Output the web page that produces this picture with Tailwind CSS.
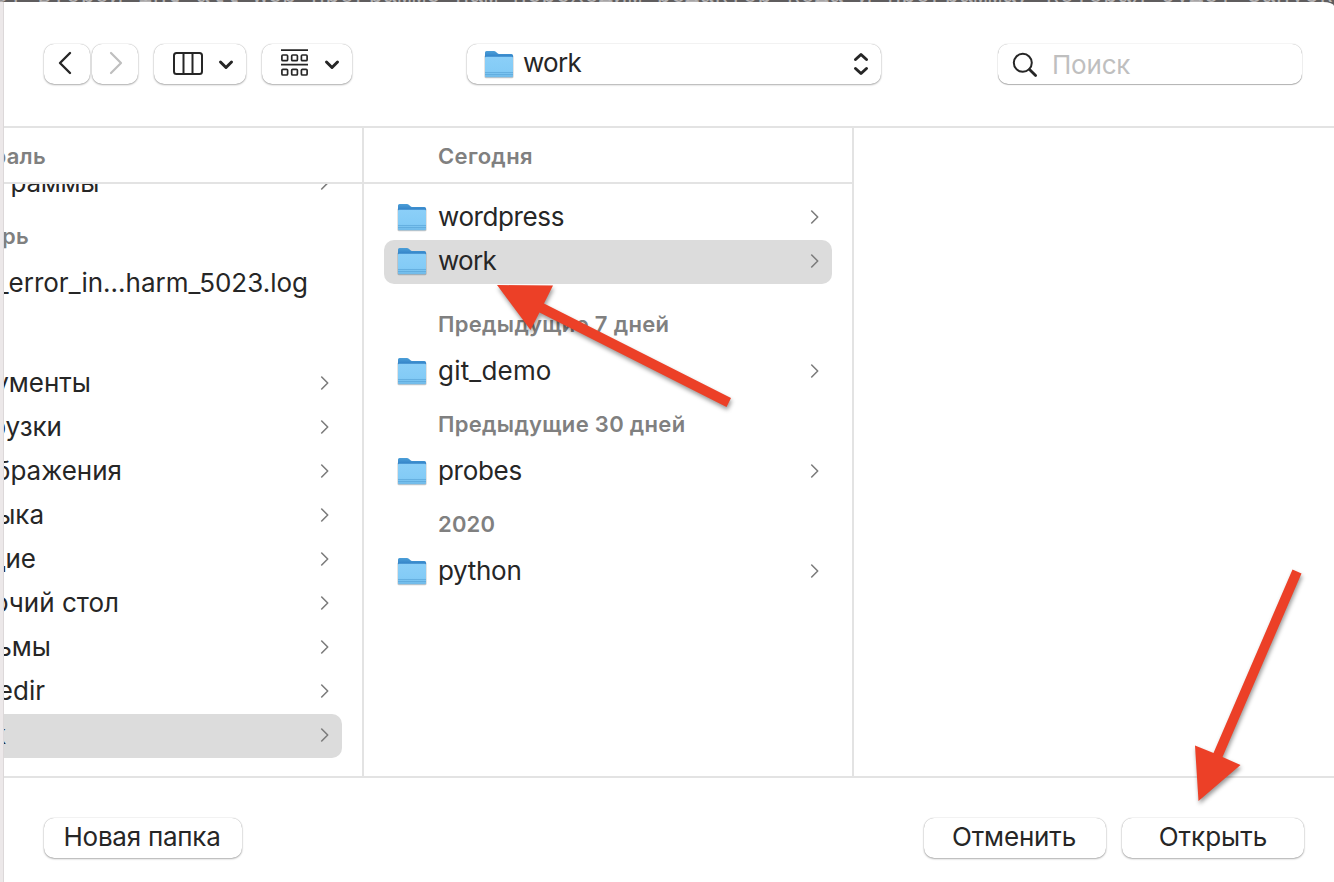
<!DOCTYPE html>
<html lang="ru">
<head>
<meta charset="utf-8">
<title>Открыть</title>
<script src="https://cdn.jsdelivr.net/npm/@tailwindcss/browser@4"></script>
</head>
<body class="w-[1334px] h-[882px] overflow-hidden bg-white font-['Inter',sans-serif] text-[26px] text-[#262626]">
<svg class="absolute h-0 w-0">
  <defs>
    <linearGradient id="front" x1="0" y1="0" x2="0" y2="1"><stop offset="0" stop-color="#8bcff8"/><stop offset=".7" stop-color="#83cbf6"/><stop offset="1" stop-color="#6fb9e8"/></linearGradient>
    <linearGradient id="back" x1="0" y1="0" x2="0" y2="1"><stop offset="0" stop-color="#4c9fd8"/><stop offset=".6" stop-color="#2f7fc6"/></linearGradient>
  </defs>
  <symbol id="folder" viewBox="0 0 32 30">
    <rect x="1.500" y="5" width="29" height="23.300" rx="1.500" fill="#000" opacity=".22"/>
    <path d="M2 2.500Q2 1 3.500 1H11Q12 1 12.800 1.800L14.500 3.300Q15 4 16 4H28.500Q30 4 30 5.500V12H2Z" fill="url(#back)"/>
    <path d="M2 7.700Q2 6.700 3 6.700H29Q30 6.700 30 7.700V26Q30 27.300 28.700 27.300H3.300Q2 27.300 2 26Z" fill="url(#front)"/>
    <path d="M2 22.500H30M2 24.500H30" stroke="#5aa6d8" stroke-width=".7"/>
  </symbol>
  <symbol id="chev" viewBox="0 0 10 16"><path d="M1.700 2L7.700 8L1.700 14" fill="none" stroke="#7c7c7c" stroke-width="1.600" stroke-linecap="round" stroke-linejoin="round"/></symbol>
  <symbol id="down" viewBox="0 0 16 12"><path d="M2.500 3L8 8.500L13.500 3" fill="none" stroke="#262626" stroke-width="3" stroke-linecap="round" stroke-linejoin="round"/></symbol>
</svg>

<div class="relative flex h-full flex-col bg-[#5f5d5e]">
  <div class="h-[2px] shrink-0 overflow-hidden">
    <div class="-ml-[6px] -mt-4 whitespace-pre font-['Liberation_Mono',monospace] text-[24px] leading-6 text-[#b5b3b4]">от второй int all web-программе нам переходим редактор кода и программа, которая будет запускать</div>
  </div>
  <div class="flex min-h-0 grow rounded-tr-[11px_4px] bg-white">
    <div class="w-[4px] shrink-0 border-r border-[#dcd8d9] bg-[#ece8e9]"></div>
    <div class="flex min-w-0 grow flex-col">

      <header class="flex h-[126px] shrink-0 items-start border-b-2 border-[#e3e3e3] pl-[40px] pt-[42px]">
        <div class="flex h-10 gap-[2px]">
          <button class="flex w-[46px] items-center justify-center rounded-[10px] shadow-[0_0_1px_rgba(0,0,0,.35),0_1px_2px_rgba(0,0,0,.3)]">
            <svg class="mr-1 mb-[2px] h-6 w-4" viewBox="0 0 16 24"><path d="M13 2L3 12L13 22" fill="none" stroke="#262626" stroke-width="2.400" stroke-linecap="round" stroke-linejoin="round"/></svg>
          </button>
          <button class="flex w-[46px] items-center justify-center rounded-[10px] shadow-[0_0_1px_rgba(0,0,0,.35),0_1px_2px_rgba(0,0,0,.3)]">
            <svg class="ml-[2px] mb-[2px] h-6 w-4" viewBox="0 0 16 24"><path d="M3 2L13 12L3 22" fill="none" stroke="#bfbfbf" stroke-width="2.200" stroke-linecap="round" stroke-linejoin="round"/></svg>
          </button>
        </div>
        <button class="ml-4 flex h-10 w-[92px] items-start rounded-[10px] pl-[18px] pt-[7px] shadow-[0_0_1px_rgba(0,0,0,.35),0_1px_2px_rgba(0,0,0,.3)]">
          <svg class="h-[25px] w-8" viewBox="0 0 32 25"><g fill="none" stroke="#262626" stroke-width="2"><rect x="2" y="2" width="28" height="21" rx="2.500"/><path d="M11.500 2V23M20.500 2V23"/></g></svg>
          <svg class="ml-[14px] mt-2 h-3 w-4"><use href="#down"/></svg>
        </button>
        <button class="ml-4 flex h-10 w-[90px] items-start rounded-[10px] pl-[18px] pt-1 shadow-[0_0_1px_rgba(0,0,0,.35),0_1px_2px_rgba(0,0,0,.3)]">
          <svg class="h-[30px] w-[30px]" viewBox="0 0 30 30"><g fill="none" stroke="#262626" stroke-width="1.700"><path d="M1 2.200H28M1 16.700H28"/><rect x="1.900" y="7" width="5.700" height="5.700" rx="1"/><rect x="11.700" y="7" width="5.700" height="5.700" rx="1"/><rect x="21.400" y="7" width="5.700" height="5.700" rx="1"/><rect x="1.900" y="21.300" width="5.700" height="5.700" rx="1"/><rect x="11.700" y="21.300" width="5.700" height="5.700" rx="1"/><rect x="21.400" y="21.300" width="5.700" height="5.700" rx="1"/></g></svg>
          <svg class="ml-[14px] mt-[11px] h-3 w-4"><use href="#down"/></svg>
        </button>
        <div class="ml-[115px] flex h-10 w-[414px] items-center rounded-[10px] pl-4 pr-[11px] shadow-[0_0_1px_rgba(0,0,0,.35),0_1px_2px_rgba(0,0,0,.3)]">
          <svg class="mt-px h-[30px] w-8"><use href="#folder"/></svg>
          <span class="ml-2 -mt-[2px] grow leading-10 tracking-[-.7px]">work</span>
          <svg class="h-6 w-[18px]" viewBox="0 0 18 24"><path d="M3.500 7.500L9 2.500L14.500 7.500M3.500 16.500L9 21.500L14.500 16.500" fill="none" stroke="#262626" stroke-width="3" stroke-linecap="round" stroke-linejoin="round"/></svg>
        </div>
        <div class="ml-[117px] flex h-10 w-[304px] items-center rounded-[10px] pl-[14px] shadow-[0_0_1px_rgba(0,0,0,.4),0_1px_1px_rgba(0,0,0,.28)]">
          <svg class="mt-px h-[26px] w-[26px]" viewBox="0 0 26 26"><g fill="none" stroke="#262626" stroke-linecap="round"><circle cx="10.800" cy="10.800" r="9" stroke-width="2"/><path d="M17.500 17.500L23.600 23.600" stroke-width="2.800"/></g></svg>
          <span class="ml-[14px] mt-[2px] leading-10 tracking-[-.2px] text-[#bfbfbf]">Поиск</span>
        </div>
      </header>

      <main class="flex h-[650px] shrink-0 border-b-2 border-[#e3e3e3]">
        <section class="flex w-[360px] shrink-0 flex-col overflow-hidden border-r-2 border-[#e3e3e3]">
          <div class="flex h-14 shrink-0 border-b-2 border-[#e3e3e3] text-[22px] font-semibold leading-[56px] text-[#808080]"><div class="flex w-[42px] justify-end whitespace-nowrap tracking-[.3px]">враль</div></div>
          <div class="min-h-0 grow overflow-hidden leading-[42px]">
            <div class="-mt-[22px] flex h-11 items-center justify-between pr-[32px] pb-[2px]"><div class="flex w-[95px] justify-end whitespace-nowrap tracking-[-.3px]">граммы</div><svg class="h-4 w-[10px]"><use href="#chev"/></svg></div>
            <div class="flex h-14 pt-[5px] text-[22px] font-semibold leading-[50px] text-[#808080]"><div class="flex w-[25px] justify-end whitespace-nowrap tracking-[.3px]">арь</div></div>
            <div class="mb-14 flex h-11 items-center pb-[2px]"><div class="flex w-[304px] justify-end whitespace-nowrap">_error_in...harm_5023.log</div></div>
            <div class="flex h-11 items-center justify-between pr-[32px] pb-[2px]"><div class="flex w-[87px] justify-end whitespace-nowrap">ументы</div><svg class="h-4 w-[10px]"><use href="#chev"/></svg></div>
            <div class="flex h-11 items-center justify-between pr-[32px] pb-[2px]"><div class="flex w-[58px] justify-end whitespace-nowrap">рузки</div><svg class="h-4 w-[10px]"><use href="#chev"/></svg></div>
            <div class="flex h-11 items-center justify-between pr-[32px] pb-[2px]"><div class="flex w-[118px] justify-end whitespace-nowrap">бражения</div><svg class="h-4 w-[10px]"><use href="#chev"/></svg></div>
            <div class="flex h-11 items-center justify-between pr-[32px] pb-[2px]"><div class="flex w-[40px] justify-end whitespace-nowrap">ыка</div><svg class="h-4 w-[10px]"><use href="#chev"/></svg></div>
            <div class="flex h-11 items-center justify-between pr-[32px] pb-[2px]"><div class="flex w-[32px] justify-end whitespace-nowrap">щие</div><svg class="h-4 w-[10px]"><use href="#chev"/></svg></div>
            <div class="flex h-11 items-center justify-between pr-[32px] pb-[2px]"><div class="flex w-[115px] justify-end whitespace-nowrap">очий стол</div><svg class="h-4 w-[10px]"><use href="#chev"/></svg></div>
            <div class="flex h-11 items-center justify-between pr-[32px] pb-[2px]"><div class="flex w-[47px] justify-end whitespace-nowrap">ьмы</div><svg class="h-4 w-[10px]"><use href="#chev"/></svg></div>
            <div class="flex h-11 items-center justify-between pr-[32px] pb-[2px]"><div class="flex w-[41px] justify-end whitespace-nowrap">edir</div><svg class="h-4 w-[10px]"><use href="#chev"/></svg></div>
            <div class="mr-5 flex h-11 items-center justify-between rounded-r-[10px] bg-[#dcdcdc] pr-[12px] pb-[2px]"><div class="flex w-[2px] justify-end whitespace-nowrap">k</div><svg class="h-4 w-[10px]"><use href="#chev"/></svg></div>
          </div>
        </section>

        <section class="flex w-[490px] shrink-0 flex-col border-r-2 border-[#e3e3e3]">
          <div class="h-14 shrink-0 border-b-2 border-[#e3e3e3] pl-[74px] text-[22px] font-semibold leading-[56px] tracking-[.35px] text-[#808080]">Сегодня</div>
          <div class="px-5 pt-3 leading-[42px]">
            <div class="flex h-11 items-center pl-3 pr-[12px] pb-[2px]"><svg class="mt-[2px] h-[30px] w-8"><use href="#folder"/></svg><span class="ml-[10px] grow tracking-[-.4px]">wordpress</span><svg class="h-4 w-[10px]"><use href="#chev"/></svg></div>
            <div class="flex h-11 items-center rounded-[10px] bg-[#dcdcdc] pl-3 pr-[12px] pb-[2px]"><svg class="mt-[2px] h-[30px] w-8"><use href="#folder"/></svg><span class="ml-[10px] grow tracking-[-.7px]">work</span><svg class="h-4 w-[10px]"><use href="#chev"/></svg></div>
            <div class="h-[66px] pl-[54px] pt-[15px] text-[22px] font-semibold leading-[50px] tracking-[.32px] text-[#808080]">Предыдущие 7 дней</div>
            <div class="flex h-11 items-center pl-3 pr-[12px] pb-[2px]"><svg class="mt-[2px] h-[30px] w-8"><use href="#folder"/></svg><span class="ml-[10px] grow tracking-[.2px]">git_demo</span><svg class="h-4 w-[10px]"><use href="#chev"/></svg></div>
            <div class="h-14 pl-[54px] pt-[5px] text-[22px] font-semibold leading-[50px] tracking-[.32px] text-[#808080]">Предыдущие 30 дней</div>
            <div class="flex h-11 items-center pl-3 pr-[12px] pb-[2px]"><svg class="mt-[2px] h-[30px] w-8"><use href="#folder"/></svg><span class="ml-[10px] grow tracking-[-.3px]">probes</span><svg class="h-4 w-[10px]"><use href="#chev"/></svg></div>
            <div class="h-14 pl-[54px] pt-[5px] text-[22px] font-semibold leading-[50px] tracking-[.2px] text-[#808080]">2020</div>
            <div class="flex h-11 items-center pl-3 pr-[12px] pb-[2px]"><svg class="mt-[2px] h-[30px] w-8"><use href="#folder"/></svg><span class="ml-[10px] grow tracking-[-.3px]">python</span><svg class="h-4 w-[10px]"><use href="#chev"/></svg></div>
          </div>
        </section>
      </main>

      <footer class="flex grow items-start pl-[40px] pr-[30px] pt-10">
        <button class="h-10 w-[198px] rounded-[10px] pb-[2px] pr-[2px] leading-[38px] tracking-[-.25px] shadow-[0_0_1px_rgba(0,0,0,.35),0_1px_2px_rgba(0,0,0,.3)]">Новая папка</button>
        <button class="ml-auto h-10 w-[182px] rounded-[10px] pb-[2px] pr-[2px] leading-[38px] tracking-[-.15px] shadow-[0_0_1px_rgba(0,0,0,.35),0_1px_2px_rgba(0,0,0,.3)]">Отменить</button>
        <button class="ml-4 h-10 w-[182px] rounded-[10px] pb-[2px] leading-[38px] shadow-[0_0_1px_rgba(0,0,0,.35),0_1px_2px_rgba(0,0,0,.3)]">Открыть</button>
      </footer>
    </div>
  </div>

  <!-- red pointer arrows drawn over the dialog -->
  <svg class="pointer-events-none absolute inset-0 h-[882px] w-[1334px] drop-shadow-[1px_3px_2px_rgba(0,0,0,.4)]" viewBox="0 0 1334 882" fill="#ec4027">
    <path d="M497 285L553 285.500L544 303.500L731 398L726.500 407L539.500 312.500L530.500 330Z"/>
    <path d="M1198.500 801L1195 745.500L1213.500 753L1292.500 569.500L1301.500 573.500L1222.500 757L1240.500 765Z"/>
  </svg>
</div>
</body>
</html>
